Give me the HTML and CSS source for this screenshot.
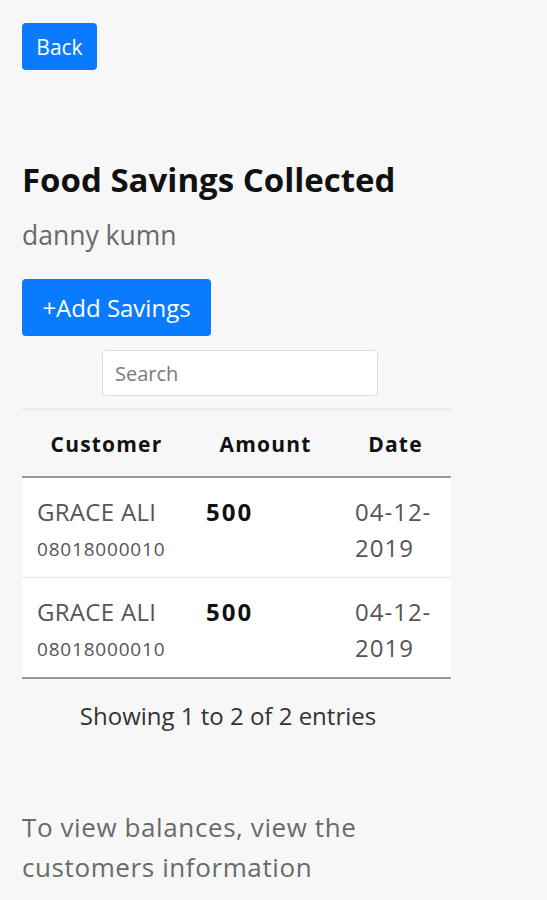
FILE: index.html
```html
<!DOCTYPE html>
<html>
<head>
<meta charset="utf-8">
<link rel="stylesheet" href="styles.css">
</head>
<body>
<div class="page">
  <button class="btn btn-back">Back</button>
  <h1 class="title">Food Savings Collected</h1>
  <p class="subtitle">danny kumn</p>
  <button class="btn btn-add">+Add Savings</button>
  <div class="search-wrap">
    <input class="search" type="text" placeholder="Search">
  </div>
  <table class="savings">
    <thead>
      <tr>
        <th class="col-customer">Customer</th>
        <th class="col-amount">Amount</th>
        <th class="col-date">Date</th>
      </tr>
    </thead>
    <tbody>
      <tr>
        <td><div class="name">GRACE ALI</div><div class="phone">08018000010</div></td>
        <td class="amount">500</td>
        <td class="date">04-12-2019</td>
      </tr>
      <tr>
        <td><div class="name">GRACE ALI</div><div class="phone">08018000010</div></td>
        <td class="amount">500</td>
        <td class="date">04-12-2019</td>
      </tr>
    </tbody>
  </table>
  <p class="info">Showing 1 to 2 of 2 entries</p>
  <p class="note">To view balances, view the customers information</p>
</div>
</body>
</html>
```

FILE: styles.css
```css
html, body {
  margin: 0;
  padding: 0;
  background: #f7f7f7;
}
body {
  font-family: "Open Sans", "Noto Sans", sans-serif;
  color: #212529;
}
.page {
  padding: 23px 22px 0 22px;
  width: 429px;
}
.btn {
  display: block;
  border: none;
  background: #0a7bff;
  color: #fff;
  font-family: "Open Sans", "Noto Sans", sans-serif;
  border-radius: 4px;
  padding: 0;
}
.btn-back {
  width: 75px;
  height: 47px;
  font-size: 21px;
}
.title {
  margin: 91px 0 0 0;
  font-size: 33px;
  line-height: 38px;
  font-weight: 700;
  color: #111;
}
.subtitle {
  margin: 18px 0 0 0;
  font-size: 26.5px;
  line-height: 36px;
  color: #6a6a6a;
}
.btn-add {
  margin-top: 26px;
  width: 189px;
  height: 57px;
  font-size: 24px;
}
.search-wrap {
  margin-top: 14px;
  padding-left: 80px;
  padding-bottom: 12px;
  border-bottom: 2px solid #ececec;
}
.search {
  display: block;
  box-sizing: border-box;
  width: 276px;
  height: 46px;
  border: 1px solid #dcdcdc;
  border-radius: 4px;
  background: #fff;
  padding: 0 12px;
  font-family: "Open Sans", "Noto Sans", sans-serif;
  font-size: 20px;
}
.search::placeholder {
  color: #7a7a7a;
}
.savings {
  width: 429px;
  border-collapse: collapse;
  table-layout: fixed;
}
.col-customer { width: 169px; }
.col-amount { width: 149px; }
.col-date { width: 111px; }
.savings th {
  height: 64px;
  padding: 2px 0 0 0;
  font-size: 21px;
  font-weight: 700;
  letter-spacing: 1.2px;
  color: #111;
  text-align: center;
  border-bottom: 2px solid #9a9a9a;
}
.savings td {
  background: #fff;
  vertical-align: top;
  padding: 16px 15px 9px 15px;
  font-size: 24px;
  line-height: 36px;
  color: #555;
  border-bottom: 1px solid #e6e6e6;
}
.savings tbody tr:last-child td {
  border-bottom: 2px solid #9a9a9a;
}
.name {
  font-size: 24px;
  line-height: 36px;
  letter-spacing: 0.3px;
}
.phone {
  font-size: 19px;
  line-height: 38px;
  letter-spacing: 0.8px;
}
.amount {
  font-weight: 700;
  color: #111 !important;
  font-size: 24px !important;
  letter-spacing: 2px;
}
.date {
  font-size: 24px;
  letter-spacing: 1px;
}
.info {
  margin: 22px 0 0 0;
  text-align: center;
  font-size: 24px;
  line-height: 30px;
  color: #333;
  width: 412px;
}
.note {
  margin: 76px 0 0 0;
  font-size: 26px;
  line-height: 40px;
  letter-spacing: 0.6px;
  color: #6a6a6a;
}
```
